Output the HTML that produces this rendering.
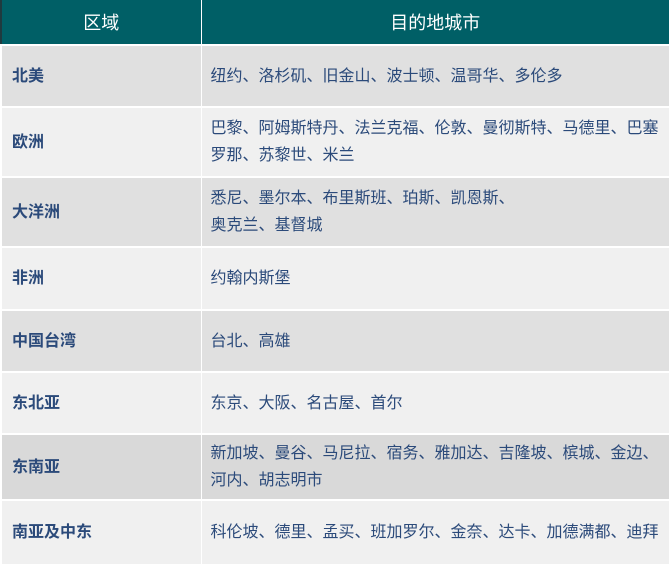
<!DOCTYPE html>
<html><head><meta charset="utf-8"><style>
html,body{margin:0;padding:0;background:#fff;width:672px;height:564px;overflow:hidden}
table{position:absolute;left:2px;top:0;width:668px;border-collapse:collapse;font-family:"Liberation Sans","Noto Sans CJK SC",sans-serif;font-size:16px;table-layout:fixed}
th{background:#005f66;color:#fff;font-weight:normal;font-size:18px;height:44px;padding:0;border-right:1px solid #fff;border-bottom:2px solid #fff}
td{color:#2b4a7a;padding:0 10px;border-right:1px solid #fff;border-bottom:2px solid #fff;line-height:27px;vertical-align:middle}
td:first-child{font-weight:bold;padding-left:10px}
td:last-child{padding-left:9px}
tr.a td{background:#e0e0e0}
tr.b td{background:#f0f0f0}
tr.c td{background:#d9d9d9}
</style></head><body>
<div style="position:absolute;left:0;top:0;width:2px;height:44px;background:#1f3a3f"></div>
<table>
<colgroup><col style="width:199px"><col></colgroup>
<tr><th>区域</th><th>目的地城市</th></tr>
<tr class="a" style="height:62px"><td>北美</td><td>纽约、洛杉矶、旧金山、波士顿、温哥华、多伦多</td></tr>
<tr class="b" style="height:70px"><td>欧洲</td><td>巴黎、阿姆斯特丹、法兰克福、伦敦、曼彻斯特、马德里、巴塞<br>罗那、苏黎世、米兰</td></tr>
<tr class="a" style="height:70px"><td>大洋洲</td><td>悉尼、墨尔本、布里斯班、珀斯、凯恩斯、<br>奥克兰、基督城</td></tr>
<tr class="b" style="height:63px"><td>非洲</td><td>约翰内斯堡</td></tr>
<tr class="a" style="height:62px"><td>中国台湾</td><td>台北、高雄</td></tr>
<tr class="b" style="height:62px"><td>东北亚</td><td>东京、大阪、名古屋、首尔</td></tr>
<tr class="c" style="height:66px"><td>东南亚</td><td>新加坡、曼谷、马尼拉、宿务、雅加达、吉隆坡、槟城、金边、<br>河内、胡志明市</td></tr>
<tr class="b" style="height:65px"><td>南亚及中东</td><td>科伦坡、德里、孟买、班加罗尔、金奈、达卡、加德满都、迪拜</td></tr>
</table>
</body></html>
